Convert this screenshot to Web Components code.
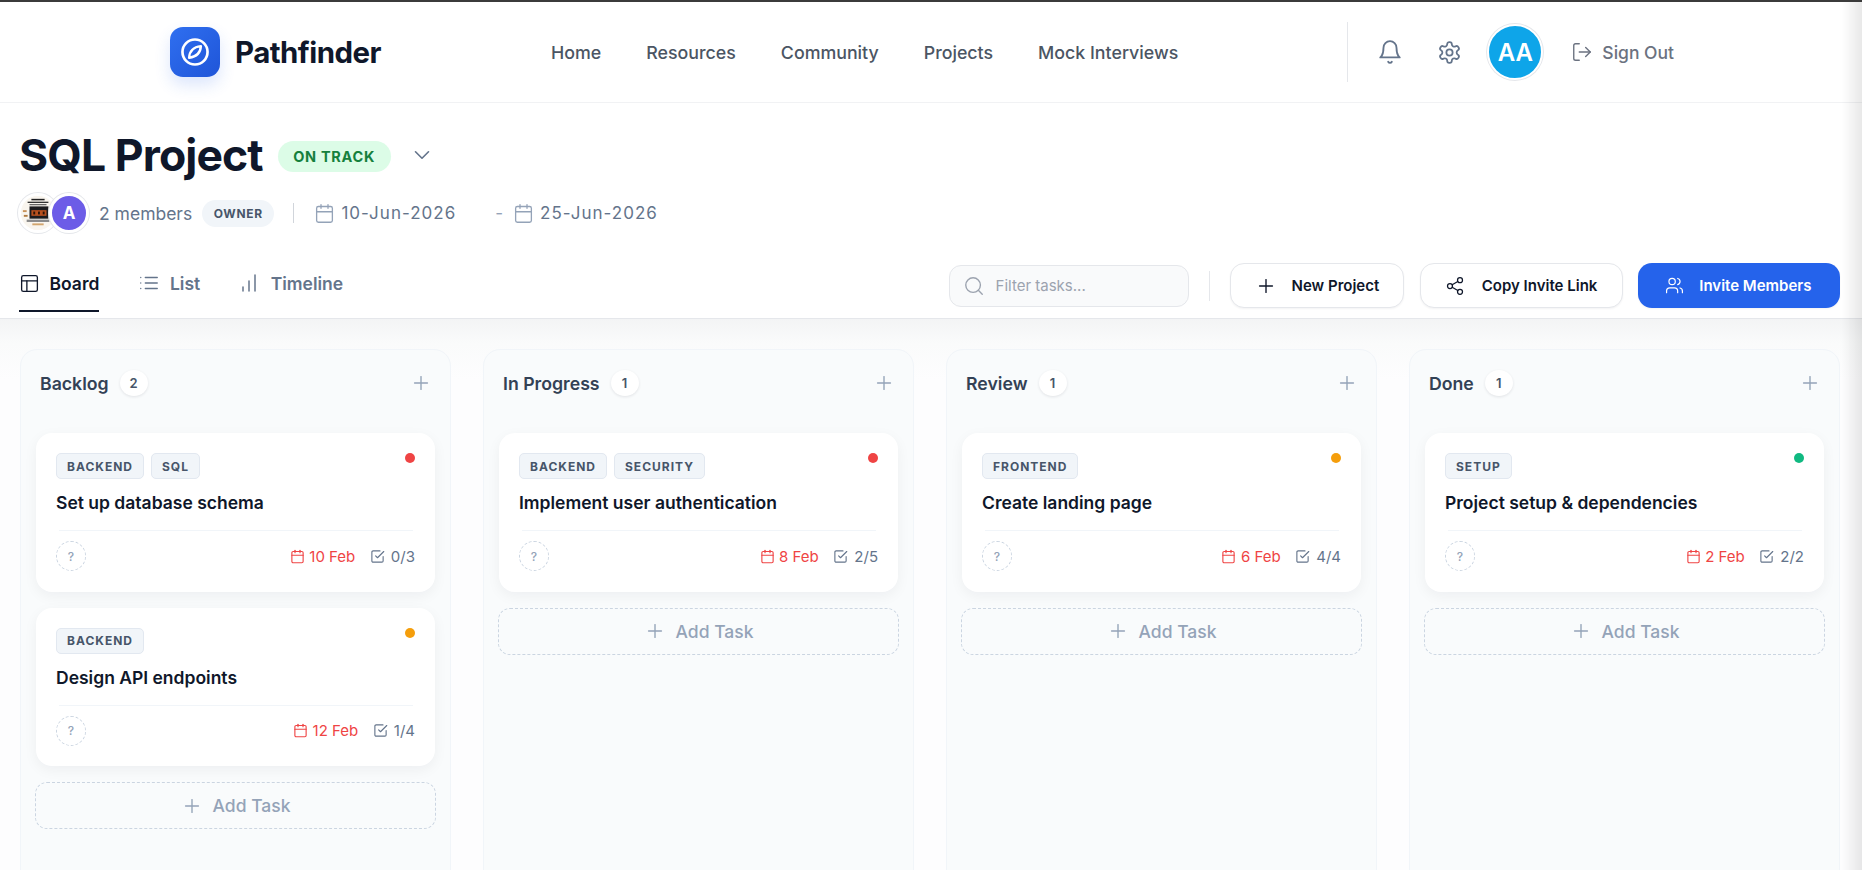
<!DOCTYPE html>
<html lang="en">
<head>
<meta charset="utf-8">
<title>Pathfinder</title>
<style>
html,body{margin:0;padding:0;height:870px;overflow:hidden;background:#fff;font-family:Inter,"Liberation Sans",sans-serif;color:#0f172a}
body{display:flex;flex-direction:column}
</style>
</head>
<body>
<app-header></app-header>
<project-head></project-head>
<view-bar></view-bar>
<kanban-board>
  <kanban-column title="Backlog" count="2">
    <task-card tags="BACKEND,SQL" dot="#ef4444" name="Set up database schema" date="10 Feb" sub="0/3"></task-card>
    <task-card tags="BACKEND" dot="#f59e0b" name="Design API endpoints" date="12 Feb" sub="1/4"></task-card>
  </kanban-column>
  <kanban-column title="In Progress" count="1">
    <task-card tags="BACKEND,SECURITY" dot="#ef4444" name="Implement user authentication" date="8 Feb" sub="2/5"></task-card>
  </kanban-column>
  <kanban-column title="Review" count="1">
    <task-card tags="FRONTEND" dot="#f59e0b" name="Create landing page" date="6 Feb" sub="4/4"></task-card>
  </kanban-column>
  <kanban-column title="Done" count="1">
    <task-card tags="SETUP" dot="#10b981" name="Project setup &amp; dependencies" date="2 Feb" sub="2/2"></task-card>
  </kanban-column>
</kanban-board>
<edge-shade></edge-shade>
<script>
const ICONS={
 bell:'<path d="M6 8a6 6 0 0 1 12 0c0 7 3 9 3 9H3s3-2 3-9"/><path d="M10.3 21a1.94 1.94 0 0 0 3.4 0"/>',
 gear:'<path d="M12.22 2h-.44a2 2 0 0 0-2 2v.18a2 2 0 0 1-1 1.73l-.43.25a2 2 0 0 1-2 0l-.15-.08a2 2 0 0 0-2.73.73l-.22.38a2 2 0 0 0 .73 2.73l.15.1a2 2 0 0 1 1 1.72v.51a2 2 0 0 1-1 1.74l-.15.09a2 2 0 0 0-.73 2.73l.22.38a2 2 0 0 0 2.73.73l.15-.08a2 2 0 0 1 2 0l.43.25a2 2 0 0 1 1 1.73V20a2 2 0 0 0 2 2h.44a2 2 0 0 0 2-2v-.18a2 2 0 0 1 1-1.73l.43-.25a2 2 0 0 1 2 0l.15.08a2 2 0 0 0 2.73-.73l.22-.39a2 2 0 0 0-.73-2.73l-.15-.08a2 2 0 0 1-1-1.74v-.5a2 2 0 0 1 1-1.74l.15-.09a2 2 0 0 0 .73-2.73l-.22-.38a2 2 0 0 0-2.73-.73l-.15.08a2 2 0 0 1-2 0l-.43-.25a2 2 0 0 1-1-1.73V4a2 2 0 0 0-2-2z"/><circle cx="12" cy="12" r="3"/>',
 logout:'<path d="M9 21H5a2 2 0 0 1-2-2V5a2 2 0 0 1 2-2h4"/><polyline points="16 17 21 12 16 7"/><line x1="21" y1="12" x2="9" y2="12"/>',
 chevron:'<path d="m6 9 6 6 6-6"/>',
 calendar:'<rect x="3" y="4" width="18" height="18" rx="2"/><line x1="16" y1="2" x2="16" y2="6"/><line x1="8" y1="2" x2="8" y2="6"/><line x1="3" y1="10" x2="21" y2="10"/>',
 board:'<rect x="3" y="3" width="18" height="18" rx="2"/><path d="M3 9h18"/><path d="M9 21V9"/>',
 list:'<line x1="8" y1="6" x2="21" y2="6"/><line x1="8" y1="12" x2="21" y2="12"/><line x1="8" y1="18" x2="21" y2="18"/><line x1="3" y1="6" x2="3.01" y2="6"/><line x1="3" y1="12" x2="3.01" y2="12"/><line x1="3" y1="18" x2="3.01" y2="18"/>',
 bars:'<path d="M12 20V10"/><path d="M18 20V4"/><path d="M6 20v-4"/>',
 search:'<circle cx="11" cy="11" r="8"/><path d="m21 21-4.3-4.3"/>',
 plus:'<path d="M5 12h14"/><path d="M12 5v14"/>',
 share:'<circle cx="18" cy="5" r="3"/><circle cx="6" cy="12" r="3"/><circle cx="18" cy="19" r="3"/><line x1="8.59" y1="13.51" x2="15.42" y2="17.49"/><line x1="15.41" y1="6.51" x2="8.59" y2="10.49"/>',
 users:'<path d="M16 21v-2a4 4 0 0 0-4-4H6a4 4 0 0 0-4 4v2"/><circle cx="9" cy="7" r="4"/><path d="M22 21v-2a4 4 0 0 0-3-3.87"/><path d="M16 3.13a4 4 0 0 1 0 7.75"/>',
 check:'<path d="m9 11 3 3L22 4"/><path d="M21 12v7a2 2 0 0 1-2 2H5a2 2 0 0 1-2-2V5a2 2 0 0 1 2-2h11"/>'
};
function define(tag,html){
  customElements.define(tag,class extends HTMLElement{
    connectedCallback(){
      if(this.shadowRoot)return;
      const r=this.attachShadow({mode:'open'});
      r.innerHTML=typeof html==='function'?html(this):html;
    }
  });
}
define('x-icon',el=>{
  const s=el.getAttribute('size')||18,w=el.getAttribute('stroke')||2;
  return `<style>:host{display:inline-flex;flex:none;width:${s}px;height:${s}px;color:inherit}svg{display:block;width:100%;height:100%}</style>
  <svg viewBox="0 0 24 24" fill="none" stroke="currentColor" stroke-width="${w}" stroke-linecap="round" stroke-linejoin="round">${ICONS[el.getAttribute('name')]}</svg>`;
});
define('app-header',`<style>
:host{display:flex;flex:none;box-sizing:border-box;height:103px;align-items:center;background:#fff;border-top:2px solid #3b3b3b;border-bottom:1px solid #f1f2f4;padding:0 188px 0 170px;box-shadow:0 2px 5px rgba(15,23,42,.025)}
.logo{width:50px;height:50px;border-radius:13px;background:linear-gradient(135deg,#2f6ff0,#1f55d8);box-shadow:0 8px 16px rgba(37,99,235,.16);display:flex;align-items:center;justify-content:center;flex:none}
.logo svg{width:32px;height:32px;display:block}
.name{font-size:29.4px;font-weight:700;letter-spacing:-.5px;color:#0f172a;margin-left:15px}
nav{display:flex;gap:45px;margin-left:170px;font-size:17.8px;font-weight:500;color:#4b5563}
.right{margin-left:auto;display:flex;align-items:center;height:60px;border-left:1px solid #e5e7eb;color:#64748b}
.bell{margin-left:29px}.gear{margin-left:34px}
.av{margin-left:25px;box-sizing:border-box;width:56px;height:56px;border-radius:50%;background:#0ea5e9;border:2px solid #fff;box-shadow:0 0 0 1px #e5e7eb;display:flex;align-items:center;justify-content:center;color:#fff;font:600 24px Inter,sans-serif}
.out{margin-left:28px;display:flex;align-items:center;gap:9px;font:500 17.5px Inter,sans-serif;color:#6b7280}
</style>
<div class="logo"><svg viewBox="0 0 24 24" fill="none" stroke="#fff" stroke-width="2" stroke-linejoin="round"><circle cx="12" cy="12" r="9.4"/><path d="M16.4 7.6C16.2 11.9 14 15.4 7.6 16.4 7.8 11.6 10.8 8.1 16.4 7.6Z" stroke-width="1.8"/></svg></div>
<div class="name">Pathfinder</div>
<nav><span>Home</span><span>Resources</span><span>Community</span><span>Projects</span><span>Mock Interviews</span></nav>
<div class="right">
  <x-icon class="bell" name="bell" size="26" stroke="1.7"></x-icon>
  <x-icon class="gear" name="gear" size="25" stroke="1.7"></x-icon>
  <div class="av">AA</div>
  <div class="out"><x-icon name="logout" size="22" stroke="1.5"></x-icon><span>Sign Out</span></div>
</div>`);
define('project-head',`<style>
:host{display:block;flex:none;padding:22px 24px 0 20px;background:#fff}
.top{display:flex;align-items:center;height:60px}
h1{margin:0 0 0 -1px;font-size:44.5px;font-weight:700;letter-spacing:-.9px;line-height:60px;color:#0f172a}
.badge{margin-left:15px;margin-top:2px;box-sizing:border-box;height:31px;padding:0 15.5px;border-radius:16px;background:#dcfce7;color:#15803d;font-size:14.5px;font-weight:700;letter-spacing:.7px;display:flex;align-items:center}
.chev{margin-left:18px;color:#64748b}
.meta{display:flex;align-items:center;height:40px;margin-top:8px;color:#64748b;font-size:17.5px}
.stack{display:flex;margin-left:-2px}
.a{box-sizing:border-box;width:40px;height:40px;border-radius:50%;border:3px solid #fff;box-shadow:0 0 0 1px #e5e7eb;overflow:hidden;flex:none;background:#f9f5ee}
.a svg{display:block;width:100%;height:100%}
.b{margin-left:-9px;background:#6c5ce7;color:#fff;display:flex;align-items:center;justify-content:center;font-weight:700;font-size:17px;position:relative}
.cnt{margin-left:10px}
.own{margin-left:10px;box-sizing:border-box;height:27px;padding:0 11.5px;border-radius:14px;background:#f1f5f9;color:#475569;font-size:12px;font-weight:700;letter-spacing:.7px;display:flex;align-items:center}
.sep{margin-left:19px;width:1px;height:20px;background:#d1d5db}
.d{letter-spacing:1px;font-size:17px}
.cal{color:#94a3b8}
</style>
<div class="top"><h1>SQL Project</h1><div class="badge">ON TRACK</div><x-icon class="chev" name="chevron" size="26" stroke="1.5"></x-icon></div>
<div class="meta">
  <div class="stack">
    <div class="a"><svg viewBox="0 0 36 36" preserveAspectRatio="none"><rect width="36" height="36" fill="#f9f5ee"/><rect x="11" y="3" width="14" height="1.6" fill="#222"/><rect x="7" y="6" width="22" height="1.4" fill="#333"/><rect x="9" y="8.6" width="18" height="1.2" fill="#555"/><rect x="9" y="11" width="20" height="13" fill="#1c1c1f"/><rect x="11" y="15" width="16" height="6" fill="#b8501e"/><rect x="13" y="16.5" width="2" height="3" fill="#2a1408"/><rect x="18" y="16.5" width="2" height="3" fill="#2a1408"/><rect x="23" y="16.5" width="2" height="3" fill="#2a1408"/><rect x="6" y="25" width="24" height="2.5" fill="#8a8a8a"/><rect x="2" y="15" width="4" height="2" fill="#c8935a"/><rect x="3" y="20" width="4" height="2" fill="#b07a3f"/><rect x="12" y="29" width="12" height="2" fill="#d2a56e"/></svg></div>
    <div class="a b">A</div>
  </div>
  <span class="cnt">2 members</span>
  <div class="own">OWNER</div>
  <div class="sep"></div>
  <x-icon class="cal" name="calendar" size="21" stroke="1.5" style="margin-left:20px"></x-icon>
  <span class="d" style="margin-left:6px">10-Jun-2026</span>
  <span style="margin-left:39px;color:#94a3b8;font-size:17px">-</span>
  <x-icon class="cal" name="calendar" size="21" stroke="1.5" style="margin-left:10px"></x-icon>
  <span class="d" style="margin-left:6px">25-Jun-2026</span>
</div>`);
define('view-tab',el=>`<style>
:host{display:flex;align-items:center;gap:9.5px;height:49px;box-sizing:border-box;padding-bottom:9px;font-size:17.5px;font-weight:600;color:${el.hasAttribute('active')?'#0f172a':'#64748b'};${el.hasAttribute('active')?'box-shadow:inset 0 -2px 0 #0f172a;':''}}
x-icon{color:${el.hasAttribute('active')?'#0f172a':'#64748b'}}
</style><x-icon name="${el.getAttribute('icon')}" size="${el.getAttribute('isize')||21}" stroke="1.5"></x-icon><span><slot></slot></span>`);
define('tool-btn',el=>{const p=el.hasAttribute('primary');return `<style>
:host{display:flex;align-items:center;box-sizing:border-box;height:45px;border-radius:14px;padding:0 ${el.getAttribute('pr')||24}px 0 ${el.getAttribute('pl')||24}px;gap:${el.getAttribute('gap')||16}px;font-size:15px;font-weight:600;white-space:nowrap;background:${p?'#2563eb':'#fff'};color:${p?'#fff':'#0f172a'};${p?'':'border:1px solid #e5e7eb;'}box-shadow:0 1px 2px rgba(15,23,42,.05)}
</style><x-icon name="${el.getAttribute('icon')}" size="${el.getAttribute('isize')||20}" stroke="1.5"></x-icon><span><slot></slot></span>`});
define('view-bar',`<style>
:host{display:flex;flex:none;box-sizing:border-box;height:56px;align-items:flex-start;padding:0 22px 0 19px;margin-top:30px;background:#fff;border-bottom:1px solid #e5e7eb}
.tabs{display:flex;gap:39px}
.tabs .tl{margin-left:-2px}
.tools{margin-left:auto;display:flex;align-items:center}
.filter{box-sizing:border-box;width:240px;height:42px;border:1px solid #e5e7eb;border-radius:12px;background:#f9fafb;display:flex;align-items:center;gap:11px;padding-left:13px;color:#9ca3af;font-size:15px}
.sep{width:1px;height:30px;background:#e5e7eb;margin:0 20px 0 20px}
.b2{margin-left:15.5px}.b3{margin-left:15px}
</style>
<div class="tabs"><view-tab icon="board" active>Board</view-tab><view-tab icon="list" isize="22">List</view-tab><view-tab class="tl" icon="bars" isize="24">Timeline</view-tab></div>
<div class="tools">
  <div class="filter"><x-icon name="search" size="22" stroke="1.5"></x-icon><span>Filter tasks...</span></div>
  <div class="sep"></div>
  <tool-btn icon="plus" isize="22" gap="15">New Project</tool-btn>
  <tool-btn class="b2" icon="share" isize="20" gap="17" pr="25">Copy Invite Link</tool-btn>
  <tool-btn class="b3" icon="users" isize="19" gap="15.5" pl="26.4" pr="28.5" primary>Invite Members</tool-btn>
</div>`);
define('kanban-board',`<style>
:host{display:grid;flex:1;min-height:0;grid-template-columns:repeat(4,431px);gap:32px;padding:30px 0 0 20px;background:linear-gradient(#f3f4f5 0,#fafbfb 24px,#fdfdfe 60px);overflow:hidden}
</style><slot></slot>`);
define('kanban-column',el=>`<style>
:host{display:flex;flex-direction:column;box-sizing:border-box;height:640px;background:#f9fbfc;border:1px solid #f1f5f9;border-radius:17px;padding:0 15px}
.h{display:flex;align-items:center;height:66px;margin-bottom:17px;color:#334155;padding:0 3px 0 4px}
.t{font-size:17.7px;font-weight:600;color:#334155}
.c{margin-left:11px;width:28px;height:26px;border-radius:50%;background:#fff;box-shadow:0 1px 3px rgba(15,23,42,.1);display:flex;align-items:center;justify-content:center;font-size:13px;font-weight:600;color:#475569}
.p{margin-left:auto;color:#94a3b8}
::slotted(task-card){margin-bottom:16px}
.add{box-sizing:border-box;height:47px;margin:0 -1px;border:1px dashed #cbd5e1;border-radius:12px;display:flex;align-items:center;justify-content:center;gap:10px;color:#94a3b8;font-size:17.5px;font-weight:500}
</style>
<div class="h"><span class="t">${el.getAttribute('title')}</span><span class="c">${el.getAttribute('count')}</span><x-icon class="p" name="plus" size="22" stroke="1.5"></x-icon></div>
<slot></slot>
<div class="add"><x-icon name="plus" size="22" stroke="1.5"></x-icon><span>Add Task</span></div>`);
define('task-card',el=>{
 const tags=el.getAttribute('tags').split(',').map(t=>`<span class="tag">${t}</span>`).join('');
 return `<style>
:host{display:block;box-sizing:border-box;height:158.5px;background:#fff;border-radius:16px;padding:20px 20px 20px 20px;box-shadow:0 4px 14px rgba(15,23,42,.05);position:relative}
.tags{display:flex;gap:7px}
.tag{box-sizing:border-box;height:26px;padding:0 10px;display:flex;align-items:center;background:#f1f5f9;border:1px solid #e2e8f0;border-radius:5px;color:#475569;font-size:12px;font-weight:700;letter-spacing:1px}
.dot{position:absolute;top:20px;right:20px;width:10px;height:10px;border-radius:50%;background:${el.getAttribute('dot')}}
.n{margin-top:12px;font-size:17.5px;font-weight:600;color:#0f172a;line-height:24px}
hr{margin:15px 2px 10px 3px;border:0;border-top:1px solid #f1f5f9;height:0}
.f{display:flex;align-items:center;height:30px}
.q{box-sizing:border-box;width:30px;height:30px;border-radius:50%;border:1px dashed #cbd5e1;display:flex;align-items:center;justify-content:center;color:#94a3b8;font-size:12px;font-weight:500}
.date{margin-left:auto;display:flex;align-items:center;gap:4.5px;color:#ef4444;font-size:15px}
.sub{margin-left:14.6px;display:flex;align-items:center;gap:6px;color:#64748b;font-size:15px}
.sub x-icon{color:#64748b}
</style>
<div class="tags">${tags}</div><span class="dot"></span>
<div class="n">${el.getAttribute('name').replace('&','&amp;')}</div>
<hr>
<div class="f"><span class="q">?</span><span class="date"><x-icon name="calendar" size="15" stroke="1.8"></x-icon><span>${el.getAttribute('date')}</span></span><span class="sub"><x-icon name="check" size="15" stroke="1.8"></x-icon><span>${el.getAttribute('sub')}</span></span></div>`});
define('edge-shade',`<style>
:host{position:fixed;top:2px;right:0;bottom:0;width:20px;pointer-events:none;background:linear-gradient(to right,rgba(0,0,0,0),rgba(0,0,0,.09))}
</style>`);
</script>
</body>
</html>
